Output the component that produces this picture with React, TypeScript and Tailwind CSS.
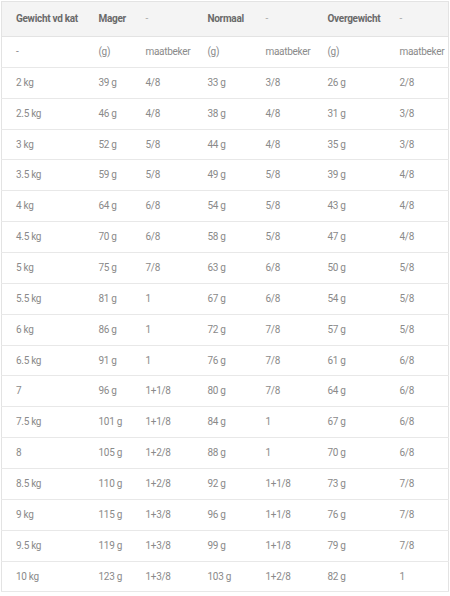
const header = ["Gewicht vd kat", "Mager", "-", "Normaal", "-", "Overgewicht", "-"];

const rows: string[][] = [
  ["-", "(g)", "maatbeker", "(g)", "maatbeker", "(g)", "maatbeker"],
  ["2 kg", "39 g", "4/8", "33 g", "3/8", "26 g", "2/8"],
  ["2.5 kg", "46 g", "4/8", "38 g", "4/8", "31 g", "3/8"],
  ["3 kg", "52 g", "5/8", "44 g", "4/8", "35 g", "3/8"],
  ["3.5 kg", "59 g", "5/8", "49 g", "5/8", "39 g", "4/8"],
  ["4 kg", "64 g", "6/8", "54 g", "5/8", "43 g", "4/8"],
  ["4.5 kg", "70 g", "6/8", "58 g", "5/8", "47 g", "4/8"],
  ["5 kg", "75 g", "7/8", "63 g", "6/8", "50 g", "5/8"],
  ["5.5 kg", "81 g", "1", "67 g", "6/8", "54 g", "5/8"],
  ["6 kg", "86 g", "1", "72 g", "7/8", "57 g", "5/8"],
  ["6.5 kg", "91 g", "1", "76 g", "7/8", "61 g", "6/8"],
  ["7", "96 g", "1+1/8", "80 g", "7/8", "64 g", "6/8"],
  ["7.5 kg", "101 g", "1+1/8", "84 g", "1", "67 g", "6/8"],
  ["8", "105 g", "1+2/8", "88 g", "1", "70 g", "6/8"],
  ["8.5 kg", "110 g", "1+2/8", "92 g", "1+1/8", "73 g", "7/8"],
  ["9 kg", "115 g", "1+3/8", "96 g", "1+1/8", "76 g", "7/8"],
  ["9.5 kg", "119 g", "1+3/8", "99 g", "1+1/8", "79 g", "7/8"],
  ["10 kg", "123 g", "1+3/8", "103 g", "1+2/8", "82 g", "1"],
];

// kolombreedtes zoals in de screenshot
const widths = [83, 47, 62, 58, 62, 72, 63];

export default function App() {
  return (
    <div className="w-[450px] h-[596px] bg-white pl-px pt-px" style={{ fontFamily: "Roboto, 'Liberation Sans', sans-serif" }}>
      <table className="table-fixed border-collapse border border-[#e3e3e3] w-[447px] text-[10px] leading-none tracking-[-0.3px]">
        <colgroup>
          {widths.map((w, i) => (
            <col key={i} style={{ width: w }} />
          ))}
        </colgroup>
        <thead>
          <tr className="bg-[#f4f4f4] h-[35px] border-b border-[#e3e3e3]">
            {header.map((h, i) => (
              <th
                key={i}
                className={`text-left pl-[14px] font-bold whitespace-nowrap ${h === "-" ? "text-[#aaa] font-normal" : "text-[#6a6a6a]"}`}
              >
                {h}
              </th>
            ))}
          </tr>
        </thead>
        <tbody>
          {rows.map((r, ri) => (
            <tr key={ri} className="h-[30.86px] border-b border-[#e8e8e8]">
              {r.map((c, ci) => (
                <td key={ci} className="pl-[14px] text-[#8a8a8a] whitespace-nowrap">
                  {c}
                </td>
              ))}
            </tr>
          ))}
        </tbody>
      </table>
    </div>
  );
}
